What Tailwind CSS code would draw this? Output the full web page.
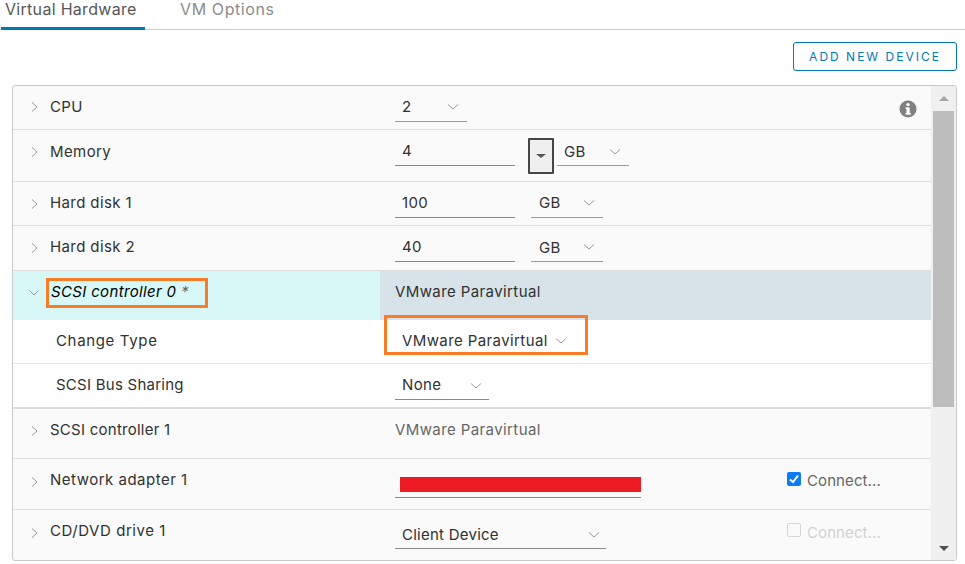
<!doctype html>
<html><head><meta charset="utf-8">
<script src="https://cdn.jsdelivr.net/npm/@tailwindcss/browser@4"></script>
</head>
<body class="bg-white">
<div class="w-[965px] h-[564px] overflow-hidden bg-white font-['Inter','Liberation_Sans',sans-serif] text-[15px] text-[#313131] tracking-[0.4px]">
  <div class="h-[30px] border-b border-[#cfcfcf] flex pl-px">
    <div class="w-[144px] h-[30px] border-b-[3px] border-[#0079b8] pl-1 text-[#565656] text-[16px] leading-[18px] tracking-[0.3px]">Virtual Hardware</div>
    <div class="ml-[35px] text-[#8c8c8c] text-[16px] leading-[18px] tracking-[0.6px]">VM Options</div>
  </div>
  <div class="flex justify-end pr-2 pt-3 h-[55px]">
    <div class="w-[164px] h-[29px] border border-[#0079b8] rounded-[3px] text-[#0079b8] text-[12px] tracking-[2px] flex items-center justify-center">ADD NEW DEVICE</div>
  </div>
  <div class="relative ml-3 w-[945px] h-[476px] border border-[#c9c9c9] rounded-[3px] bg-[#fafafa] flex overflow-hidden">
    <div class="flex-1 min-w-0">
      <div class="flex h-[44px] border-b border-[#dedede]">
        <div class="w-[367px] flex pt-[12px]"><svg class="w-[8px] h-[10px] ml-[18px] mt-[4px]" viewBox="0 0 8 10" fill="none" stroke="#9a9a9a"><path d="M1 .5 6 5 1 9.5"/></svg><span class="ml-[11px] leading-[18px]">CPU</span></div>
        <div class="pl-[15px] pt-[12px] flex-1 relative">
          <div class="w-[72px] h-[24px] border-b border-[#9a9a9a] flex justify-between pl-[7px] pr-[8px] leading-[18px]"><span>2</span><svg class="w-[12px] h-[8px] mt-[5px]" viewBox="0 0 12 8" fill="none" stroke="#9a9a9a"><path d="M1 1.5 6 6 11 1.5"/></svg></div>
          <svg class="absolute right-[14px] top-[14px] w-[18px] h-[18px]" viewBox="0 0 18 18"><circle cx="9" cy="9" r="8.5" fill="#808080"/><rect x="7.5" y="7.5" width="3.2" height="7" fill="#fff"/><rect x="6.5" y="7.5" width="3" height="1.5" fill="#fff"/><rect x="6.5" y="13" width="5.5" height="1.5" fill="#fff"/><circle cx="9" cy="4.6" r="1.7" fill="#fff"/></svg>
        </div>
      </div>
      <div class="flex h-[52px] border-b border-[#dedede]">
        <div class="w-[367px] flex pt-[13px]"><svg class="w-[8px] h-[10px] ml-[18px] mt-[4px]" viewBox="0 0 8 10" fill="none" stroke="#9a9a9a"><path d="M1 .5 6 5 1 9.5"/></svg><span class="ml-[11px] leading-[18px]">Memory</span></div>
        <div class="pl-[15px] pt-[11px] flex">
          <div class="w-[120px] h-[25px] border-b border-[#8a8a8a] pl-[7px] leading-[20px]">4</div>
          <div class="ml-[13px] w-[26px] h-[36px] mt-[-3px] border-2 border-[#454545] rounded-[1px] bg-[#efefef] flex items-center justify-center"><div class="w-0 h-0 border-x-[5px] border-x-transparent border-t-[4px] border-t-[#555]"></div></div>
          <div class="ml-[3px] w-[72px] h-[25px] border-b border-[#9a9a9a] flex justify-between pl-[7px] pr-[8px] leading-[22px]"><span>GB</span><svg class="w-[12px] h-[8px] mt-[7px]" viewBox="0 0 12 8" fill="none" stroke="#9a9a9a"><path d="M1 1.5 6 6 11 1.5"/></svg></div>
        </div>
      </div>
      <div class="flex h-[44px] border-b border-[#dedede]">
        <div class="w-[367px] flex pt-[12px]"><svg class="w-[8px] h-[10px] ml-[18px] mt-[5px]" viewBox="0 0 8 10" fill="none" stroke="#9a9a9a"><path d="M1 .5 6 5 1 9.5"/></svg><span class="ml-[11px] leading-[18px]">Hard disk 1</span></div>
        <div class="pl-[15px] pt-[11px] flex">
          <div class="w-[120px] h-[25px] border-b border-[#8a8a8a] pl-[7px] leading-[20px]">100</div>
          <div class="ml-4 w-[72px] h-[25px] border-b border-[#9a9a9a] flex justify-between pl-[8px] pr-[8px] leading-[20px]"><span>GB</span><svg class="w-[12px] h-[8px] mt-[6px]" viewBox="0 0 12 8" fill="none" stroke="#9a9a9a"><path d="M1 1.5 6 6 11 1.5"/></svg></div>
        </div>
      </div>
      <div class="flex h-[45px] border-b border-[#dedede]">
        <div class="w-[367px] flex pt-[12px]"><svg class="w-[8px] h-[10px] ml-[18px] mt-[5px]" viewBox="0 0 8 10" fill="none" stroke="#9a9a9a"><path d="M1 .5 6 5 1 9.5"/></svg><span class="ml-[11px] leading-[18px]">Hard disk 2</span></div>
        <div class="pl-[15px] pt-[11px] flex">
          <div class="w-[120px] h-[25px] border-b border-[#8a8a8a] pl-[7px] leading-[20px]">40</div>
          <div class="ml-4 w-[72px] h-[25px] border-b border-[#9a9a9a] flex justify-between pl-[8px] pr-[8px] leading-[22px]"><span>GB</span><svg class="w-[12px] h-[8px] mt-[6px]" viewBox="0 0 12 8" fill="none" stroke="#9a9a9a"><path d="M1 1.5 6 6 11 1.5"/></svg></div>
        </div>
      </div>
      <div class="relative flex h-[49px] bg-[#d8e3e9]">
        <div class="w-[367px] bg-[#d8f8f8] flex pt-[12px] text-black"><svg class="w-[10px] h-[8px] ml-[16px] mt-[6px]" viewBox="0 0 10 8" fill="none" stroke="#9a9a9a"><path d="M.5 1.5 5 6 9.500 1.5"/></svg><span class="ml-[12px] leading-[18px] italic tracking-[0.35px]">SCSI controller 0 <span class="text-[#666]">*</span></span></div>
        <div class="pl-[15px] pt-[12px] leading-[18px] text-[#313131]">VMware Paravirtual</div>
        <div class="absolute left-[33px] top-[7px] w-[162px] h-[30px] border-[3px] border-[#f97d26]"></div>
      </div>
      <div class="relative flex h-[44px] bg-white border-b border-[#e8e8e8]">
        <div class="w-[367px] pl-[43px] pt-[12px] leading-[18px] tracking-[0.65px]">Change Type</div>
        <div class="pl-[22px] pt-[12px] flex leading-[18px]"><span>VMware Paravirtual</span><svg class="w-[12px] h-[8px] ml-[7px] mt-[5px]" viewBox="0 0 12 8" fill="none" stroke="#9a9a9a"><path d="M1 1.5 6 6 11 1.5"/></svg></div>
        <div class="absolute left-[371px] top-[-5px] w-[204px] h-[40px] border-[3px] border-[#f97d26]"></div>
      </div>
      <div class="flex h-[45px] bg-white border-b-2 border-[#dcdcdc]">
        <div class="w-[367px] pl-[43px] pt-[12px] leading-[18px] tracking-[0.25px]">SCSI Bus Sharing</div>
        <div class="pl-[15px] pt-[11px]">
          <div class="w-[94px] h-[25px] border-b border-[#8a8a8a] flex justify-between pl-[7px] pr-[7px] leading-[20px]"><span>None</span><svg class="w-[12px] h-[8px] mt-[7px]" viewBox="0 0 12 8" fill="none" stroke="#9a9a9a"><path d="M1 1.5 6 6 11 1.5"/></svg></div>
        </div>
      </div>
      <div class="flex h-[50px] border-b border-[#dedede]">
        <div class="w-[367px] flex pt-[12px]"><svg class="w-[8px] h-[10px] ml-[18px] mt-[5px]" viewBox="0 0 8 10" fill="none" stroke="#9a9a9a"><path d="M1 .5 6 5 1 9.5"/></svg><span class="ml-[11px] leading-[18px] tracking-[0.25px]">SCSI controller 1</span></div>
        <div class="pl-[15px] pt-[12px] leading-[18px] text-[#666]">VMware Paravirtual</div>
      </div>
      <div class="flex h-[51px] border-b border-[#dedede]">
        <div class="w-[367px] flex pt-[12px]"><svg class="w-[8px] h-[10px] ml-[18px] mt-[6px]" viewBox="0 0 8 10" fill="none" stroke="#9a9a9a"><path d="M1 .5 6 5 1 9.5"/></svg><span class="ml-[11px] leading-[18px] tracking-[0.5px]">Network adapter 1</span></div>
        <div class="pl-[15px] pt-[18px]">
          <div class="w-[246px] h-[21px] border-b border-[#8a8a8a] pl-[5px]"><div class="w-[241px] h-[15px] bg-[#ed1c24]"></div></div>
        </div>
        <div class="ml-[146px] pt-[12px] flex"><div class="w-[14px] h-[14px] mt-px rounded-[2px] bg-[#0a7cf5] flex items-center justify-center"><svg class="w-[10px] h-[10px]" viewBox="0 0 10 10" fill="none" stroke="#fff" stroke-width="2"><path d="M1 5.500 4 8 9 1.500"/></svg></div><span class="ml-[6px] leading-[20px] text-[#666] tracking-[0.1px]">Connect...</span></div>
      </div>
      <div class="flex h-[49px]">
        <div class="w-[367px] flex pt-[12px]"><svg class="w-[8px] h-[10px] ml-[18px] mt-[6px]" viewBox="0 0 8 10" fill="none" stroke="#9a9a9a"><path d="M1 .5 6 5 1 9.5"/></svg><span class="ml-[11px] leading-[18px] tracking-[0.55px]">CD/DVD drive 1</span></div>
        <div class="pl-[15px] pt-[14px]">
          <div class="w-[211px] h-[25px] border-b border-[#8a8a8a] flex justify-between pl-[7px] pr-[6px] leading-[21px] tracking-[0.25px]"><span>Client Device</span><svg class="w-[12px] h-[8px] mt-[7px]" viewBox="0 0 12 8" fill="none" stroke="#9a9a9a"><path d="M1 1.5 6 6 11 1.5"/></svg></div>
        </div>
        <div class="ml-[181px] pt-[12px] flex"><div class="w-[14px] h-[14px] mt-px rounded-[2px] border border-[#d5d5d5]"></div><span class="ml-[6px] leading-[21px] text-[#d2d2d2] tracking-[0.1px]">Connect...</span></div>
      </div>
    </div>
    <div class="w-[25px] bg-[#f0f0f0] flex flex-col items-center">
      <div class="h-[25px] flex items-center justify-center"><div class="w-0 h-0 border-x-[5.500px] border-x-transparent border-b-[5px] border-b-[#a3a3a3]"></div></div>
      <div class="w-[21px] h-[296px] bg-[#bdbdbd]"></div>
      <div class="flex-1 flex items-end pb-[9px]"><div class="w-0 h-0 border-x-[5.500px] border-x-transparent border-t-[5px] border-t-[#505050]"></div></div>
    </div>
  </div>
</div>
</body></html>
